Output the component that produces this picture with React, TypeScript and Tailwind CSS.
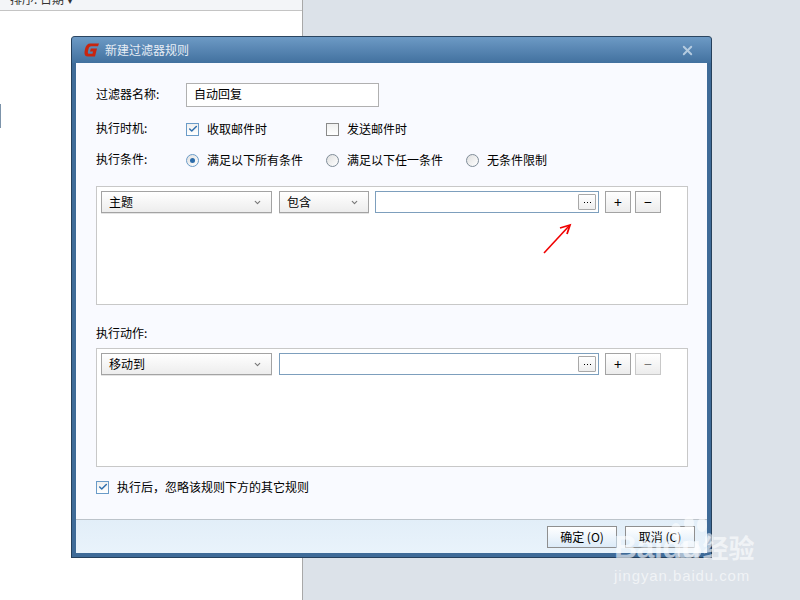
import React from 'react';
import { ChevronDown, Check, X } from 'lucide-react';

const font = { fontFamily: '"Noto Sans CJK SC", "Liberation Sans", sans-serif' };

const CheckBox = ({ checked }: { checked?: boolean }) => (
  <span className={`flex h-[13px] w-[13px] shrink-0 items-center justify-center border bg-gradient-to-b from-[#f0f0f0] to-white ${checked ? 'border-[#6a9bc8]' : 'border-[#8a8a8a]'}`}>
    {checked && <Check size={10} strokeWidth={3.5} className="text-[#2f6fae]" />}
  </span>
);

const Radio = ({ checked }: { checked?: boolean }) => (
  <span className={`flex h-[13px] w-[13px] shrink-0 items-center justify-center rounded-full border bg-gradient-to-br from-[#e0e0e0] to-white ${checked ? 'border-[#6a9bc8]' : 'border-[#7f8c98]'}`}>
    {checked && <span className="h-[5px] w-[5px] rounded-full bg-[#2c6cab]" />}
  </span>
);

const Select = ({ label, width }: { label: string; width: string }) => (
  <div className={`flex h-[22px] items-center justify-between border border-[#a3a3a3] bg-gradient-to-b from-white to-[#ededed] pl-[7px] pr-[9px] text-[12px] text-black shadow-[0_1px_0_#e4e4e4] ${width}`}>
    <span className="pb-px">{label}</span>
    <ChevronDown size={9} strokeWidth={3} className="text-[#777777]" />
  </div>
);

const SquareButton = ({ label, disabled }: { label: string; disabled?: boolean }) => (
  <div className={`flex h-[22px] w-[26px] items-center justify-center border bg-gradient-to-b from-white to-[#ececec] text-[14px] leading-none ${disabled ? 'border-[#c8c8c8] text-[#777777]' : 'border-[#a3a3a3] text-black'}`}>
    {label}
  </div>
);

const TextWithDots = ({ width }: { width: string }) => (
  <div className={`flex h-[22px] items-center justify-end border border-[#7d9fbd] bg-white pr-[2px] ${width}`}>
    <div className="flex h-[16px] w-[18px] items-center justify-center gap-[2px] rounded-[1px] border border-[#a8a8a8] bg-gradient-to-b from-white to-[#eeeeee]">
      <span className="h-px w-px bg-black" />
      <span className="h-px w-px bg-black" />
      <span className="h-px w-px bg-black" />
    </div>
  </div>
);

const FooterButton = ({ label }: { label: string }) => (
  <div className="flex h-[22px] w-[70px] items-center justify-center border border-[#8f8f8f] bg-gradient-to-b from-white to-[#dcebf8] text-[12px] text-black">
    {label}
  </div>
);

const App: React.FC = () => {
  return (
    <div className="relative h-[600px] w-[800px] overflow-hidden bg-[#dce2e9]" style={font}>
      {/* list pane behind the dialog */}
      <div className="h-full w-[303px] border-r border-[#a8a8a8] bg-white">
        <div className="h-[11px] overflow-hidden border-b border-[#c4c4c4] bg-[#f3f5f8]">
          <p className="-mt-[9px] pl-[10px] text-[12px] leading-[16px] text-[#333333]">排序: 日期 ▾</p>
        </div>
      </div>
      <div className="absolute left-0 top-[104px] h-[24px] w-px bg-[#7c93aa]" />

      {/* dialog */}
      <div className="absolute left-[71px] top-[36px] flex h-[522px] w-[641px] flex-col rounded-t-[4px] border border-[#25405c] border-t-[#2b4560] bg-[#3f6b98] px-[4px] pb-[4px]">
        <div className="-mx-[4px] flex h-[26px] shrink-0 items-center justify-between rounded-t-[3px] bg-gradient-to-b from-[#6d9ac5] to-[#42719f] pl-[12px] pr-[16px]">
          <div className="flex items-center gap-[5px]">
            <svg width="16" height="16" viewBox="0 0 16 16">
              <path d="M15 1.5 L6.5 1.5 C3.5 1.5 1.8 3.5 1 7 L0.5 10 C0.2 13 1.5 14.5 4 14.5 L11 14.5 L13 6.5 L6.8 6.5 L6 9.5 L9 9.5 L8.5 11.8 L5 11.8 C4 11.8 3.6 11 3.9 9.5 L4.6 6.8 C5 5 5.8 4.2 7.2 4.2 L14 4.2 Z" fill="#c9250f" />
            </svg>
            <span className="text-[12px] text-[#e6edf5]">新建过滤器规则</span>
          </div>
          <X size={15} strokeWidth={3} className="text-[#b5cbe0]" />
        </div>

        <div className="flex min-h-0 flex-1 flex-col bg-[#f9faff]">
          <div className="flex-1 px-[20px] text-[12px] text-black">
            <div className="mt-[20px] flex h-[24px] items-center">
              <span className="w-[90px] pb-[3px]">过滤器名称:</span>
              <div className="flex h-[24px] w-[193px] items-center border border-[#b0b0b0] bg-white pb-[3px] pl-[7px]">自动回复</div>
            </div>
            <div className="mt-[12px] flex h-[20px] items-center">
              <span className="w-[90px] pb-[2px]">执行时机:</span>
              <div className="flex w-[140px] items-center gap-[8px]"><CheckBox checked /><span>收取邮件时</span></div>
              <div className="flex items-center gap-[8px]"><CheckBox /><span>发送邮件时</span></div>
            </div>
            <div className="mt-[11px] flex h-[20px] items-center">
              <span className="w-[90px] pb-[2px]">执行条件:</span>
              <div className="flex w-[140px] items-center gap-[8px]"><Radio checked /><span>满足以下所有条件</span></div>
              <div className="flex w-[140px] items-center gap-[8px]"><Radio /><span>满足以下任一条件</span></div>
              <div className="flex items-center gap-[8px]"><Radio /><span>无条件限制</span></div>
            </div>

            <div className="relative mt-[16px] h-[119px] w-[592px] border border-[#c8c8c8] bg-white p-[4px]">
              <div className="flex gap-[7px]">
                <Select label="主题" width="w-[171px]" />
                <Select label="包含" width="w-[90px]" />
                <div className="-ml-px flex gap-[6px]">
                  <TextWithDots width="w-[224px]" />
                  <SquareButton label="+" />
                </div>
                <div className="-ml-[3px]"><SquareButton label="−" /></div>
              </div>
              <svg className="absolute left-[445px] top-[36px]" width="32" height="32" viewBox="0 0 32 32">
                <path d="M2 30 L27 3" stroke="#f00000" strokeWidth="1.6" fill="none" />
                <path d="M18 5 L28 2 L25 11" stroke="#f00000" strokeWidth="1.8" fill="none" />
              </svg>
            </div>

            <div className="mb-[7px] mt-[20px] leading-[16px]">执行动作:</div>
            <div className="h-[119px] w-[592px] border border-[#c8c8c8] bg-white p-[4px]">
              <div className="flex gap-[7px]">
                <Select label="移动到" width="w-[171px]" />
                <div className="flex gap-[6px]">
                  <TextWithDots width="w-[320px]" />
                  <SquareButton label="+" />
                </div>
                <div className="-ml-[3px]"><SquareButton label="−" disabled /></div>
              </div>
            </div>

            <div className="mt-[12px] flex h-[16px] items-center gap-[8px]">
              <CheckBox checked />
              <span>执行后，忽略该规则下方的其它规则</span>
            </div>
          </div>

          <div className="flex h-[34px] shrink-0 items-center justify-end gap-[8px] border-t border-[#bcc3ca] bg-gradient-to-b from-[#e2eef8] to-[#e9f3fb] pr-[12px]">
            <FooterButton label="确定 (O)" />
            <FooterButton label="取消 (C)" />
          </div>
        </div>
      </div>

      {/* watermark */}
      <div className="absolute left-[614px] top-[515px] flex flex-col text-white/60">
        <svg className="absolute left-[50px] top-0" width="60" height="48" viewBox="0 0 60 48">
          <g fill="#ffffff" fillOpacity="0.55">
            <ellipse cx="12" cy="15" rx="5" ry="7" />
            <ellipse cx="25" cy="8" rx="5" ry="7" />
            <ellipse cx="38" cy="10" rx="5" ry="7" />
            <ellipse cx="45" cy="24" rx="4" ry="6" />
            <path d="M14 36 C17 24 30 22 36 32 C40 40 34 44 28 42 C24 41 20 44 17 43 C14 42 13 40 14 36 Z" />
          </g>
        </svg>
        <div className="flex items-center gap-[2px] pt-[14px]">
          <span className="text-[32px] font-bold leading-[36px] tracking-[-0.5px]" style={{ fontFamily: '"Liberation Sans", sans-serif' }}>Baidu</span>
          <span className="text-[26px] font-bold leading-[36px]">经验</span>
        </div>
        <span className="mt-[2px] text-[15px] leading-[17px] tracking-[0.9px]" style={{ fontFamily: '"Liberation Sans", sans-serif' }}>jingyan.baidu.com</span>
      </div>
    </div>
  );
};

export default App;
